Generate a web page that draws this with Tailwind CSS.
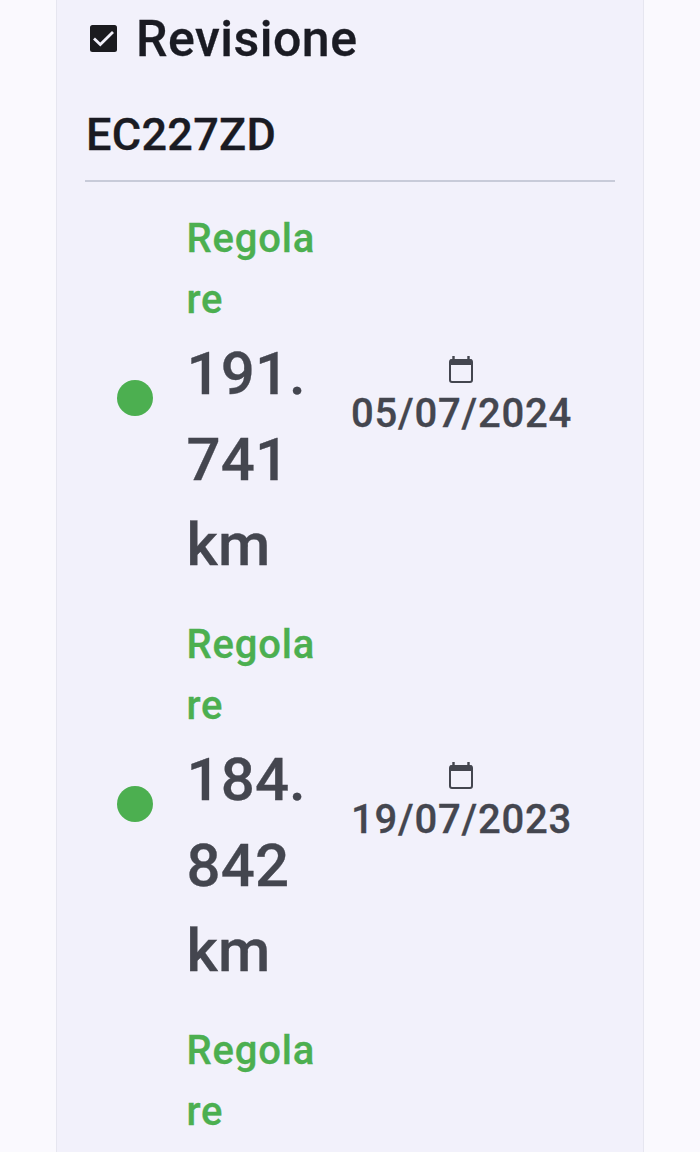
<!DOCTYPE html>
<html lang="it">
<head>
  <meta charset="UTF-8" />
  <meta name="viewport" content="width=device-width, initial-scale=1" />
  <title>Revisione</title>
  <script src="https://cdn.jsdelivr.net/npm/@tailwindcss/browser@4"></script>
</head>
<body class="bg-[#faf9fe] font-['Roboto',sans-serif] font-medium [-webkit-text-stroke:0.3px] h-[1152px] overflow-hidden">

  <main class="w-[588px] h-full ml-14 px-7 bg-[#f2f1fb] border-x border-[#e6e6f0] overflow-hidden">

    <!-- Title -->
    <header class="flex items-center h-[78px] pl-[5px]">
      <svg class="w-[27px] h-[27px] mt-[-1px] shrink-0" viewBox="0 0 27 27">
        <rect width="27" height="27" rx="2.5" fill="#1b1b1f" />
        <path d="M4 13.5l6.3 6L23 7" fill="none" stroke="#f2f1fb" stroke-width="2.8" />
      </svg>
      <h1 class="ml-[19px] mt-[-1px] text-[50px] leading-none tracking-[0.5px] text-[#1a1b23]">Revisione</h1>
    </header>

    <!-- Plate -->
    <h2 class="h-[104px] pt-[35px] pl-px border-b-2 border-[#c8cbd9] text-[45px] leading-[44px] tracking-[0.3px] text-[#1a1b23]">EC227ZD</h2>

    <!-- Inspections -->
    <section class="mt-[26px] space-y-[26px]">
      <div class="flex items-center h-[380px]">
        <span class="ml-8 w-9 h-9 rounded-full bg-[#4caf50] shrink-0"></span>
        <div class="ml-[33.5px] w-[130px] h-[380px] shrink-0">
          <div class="text-[40px] leading-[61px] tracking-[0.8px] text-[#4caf50]">Regola<br />re</div>
          <div class="mt-px text-[60px] leading-[85.5px] tracking-[0.1px] text-[#44464f]">191.<br />741<br />km</div>
        </div>
        <div class="ml-[30px] mt-[4px] w-[230px] flex flex-col items-center shrink-0 text-[#44464f]">
          <svg class="w-6 h-[27px] mr-[2px]" viewBox="0 0 24 27">
            <path d="M4.5 0v4M19.5 0v4" stroke="#44464f" stroke-width="2.4" />
            <rect x="1" y="4" width="22" height="22" rx="2" fill="none" stroke="#44464f" stroke-width="2" />
            <path d="M1 3.5h22v5.5H1z" fill="#44464f" />
          </svg>
          <div class="text-[40px] leading-[61px] tracking-[0.8px]">05/07/2024</div>
        </div>
      </div>

      <div class="flex items-center h-[380px]">
        <span class="ml-8 w-9 h-9 rounded-full bg-[#4caf50] shrink-0"></span>
        <div class="ml-[33.5px] w-[130px] h-[380px] shrink-0">
          <div class="text-[40px] leading-[61px] tracking-[0.8px] text-[#4caf50]">Regola<br />re</div>
          <div class="mt-px text-[60px] leading-[85.5px] tracking-[0.1px] text-[#44464f]">184.<br />842<br />km</div>
        </div>
        <div class="ml-[30px] mt-[4px] w-[230px] flex flex-col items-center shrink-0 text-[#44464f]">
          <svg class="w-6 h-[27px] mr-[2px]" viewBox="0 0 24 27">
            <path d="M4.5 0v4M19.5 0v4" stroke="#44464f" stroke-width="2.4" />
            <rect x="1" y="4" width="22" height="22" rx="2" fill="none" stroke="#44464f" stroke-width="2" />
            <path d="M1 3.5h22v5.5H1z" fill="#44464f" />
          </svg>
          <div class="text-[40px] leading-[61px] tracking-[0.8px]">19/07/2023</div>
        </div>
      </div>

      <!-- Third entry, continues below the fold -->
      <div class="flex h-[380px]">
        <div class="ml-[101.5px] w-[130px] shrink-0">
          <div class="text-[40px] leading-[61px] tracking-[0.8px] text-[#4caf50]">Regola<br />re</div>
        </div>
      </div>
    </section>
  </main>
</body>
</html>
